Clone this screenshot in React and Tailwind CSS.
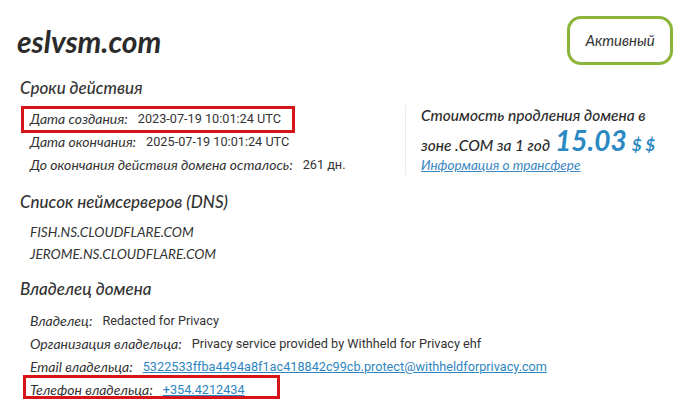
import React from 'react';

const FONT_LABEL = { fontFamily: 'Lato, "Noto Sans", sans-serif' };

function Row({ label, children, box, valueClass = 'text-[#333]' }) {
  return (
    <div className="relative flex h-[23px] items-center pl-[30px]">
      {box && (
        <div
          className="pointer-events-none absolute border-[3px] border-[#d7141a]"
          style={box}
        />
      )}
      <span className="font-['Lato','Noto_Sans',sans-serif] text-[14px] italic text-[#333]">{label}</span>
      <span className={`ml-[10px] font-['Roboto',sans-serif] text-[12.7px] ${valueClass}`}>{children}</span>
    </div>
  );
}

function Heading({ children, className = '' }) {
  return (
    <h2 className={`pl-5 font-['Lato','Noto_Sans',sans-serif] text-[17px] font-medium italic leading-5 text-[#333] ${className}`}>
      {children}
    </h2>
  );
}

export default function App() {
  return (
    <div className="h-[406px] w-[690px] overflow-hidden bg-white" style={FONT_LABEL}>
      {/* Шапка */}
      <div className="flex items-start justify-between pr-[17px] pt-4">
        <h1 className="mt-[9px] pl-[17px] font-['Lato',sans-serif] text-[30px] font-bold italic leading-8 text-[#2b2b2b]">
          eslvsm.com
        </h1>
        <div className="flex h-[49px] w-[106px] items-center justify-center rounded-[14px] border-[3px] border-[#8cb43a] text-[15px] italic text-[#333]">
          Активный
        </div>
      </div>

      {/* Сроки + цена */}
      <div className="mt-[13px] flex">
        <div className="w-[405px]">
          <Heading>Сроки действия</Heading>
          <div className="mt-[9px]">
            <Row label="Дата создания:" box={{ left: 21, top: -1, width: 274, height: 27 }}>
              2023-07-19 10:01:24 UTC
            </Row>
            <Row label="Дата окончания:">2025-07-19 10:01:24 UTC</Row>
            <Row label="До окончания действия домена осталось:">261 дн.</Row>
          </div>
        </div>
        <div className="mt-[27px] h-[70px] border-l border-[#ececec] pl-[15px]">
          <p className="font-['Lato',sans-serif] text-[15.5px] font-medium italic leading-5 text-[#2b2b2b]">
            Стоимость продления домена в
          </p>
          <p className="mt-[2px] flex h-[26px] items-baseline font-['Lato',sans-serif] text-[15.5px] font-medium italic leading-[26px] text-[#2b2b2b]">
            зоне .COM за 1 год
            <span className="ml-[5px] text-[28px] font-bold leading-[26px] text-[#2a88c2]">15.03</span>
            <span className="ml-[5px] text-[17px] font-bold text-[#2a88c2]">$ $</span>
          </p>
          <a className="mt-[3px] block text-[13.5px] italic leading-[18px] text-[#3a86c2] underline">Информация о трансфере</a>
        </div>
      </div>

      {/* DNS */}
      <Heading className="mt-[16px]">Список неймсерверов (DNS)</Heading>
      <div className="mt-[9px] pl-[30px] text-[13.6px] italic leading-[22px] text-[#333]">
        <div>FISH.NS.CLOUDFLARE.COM</div>
        <div>JEROME.NS.CLOUDFLARE.COM</div>
      </div>

      {/* Владелец */}
      <Heading className="mt-[14px]">Владелец домена</Heading>
      <div className="mt-[10px]">
        <Row label="Владелец:">Redacted for Privacy</Row>
        <Row label="Организация владельца:">Privacy service provided by Withheld for Privacy ehf</Row>
        <Row label="Email владельца:" valueClass="text-[#2e86c1] underline">
          5322533ffba4494a8f1ac418842c99cb.protect@withheldforprivacy.com
        </Row>
        <Row
          label="Телефон владельца:"
          box={{ left: 23, top: -3, width: 257, height: 24 }}
          valueClass="text-[#2e86c1] underline"
        >
          +354.4212434
        </Row>
      </div>
    </div>
  );
}
